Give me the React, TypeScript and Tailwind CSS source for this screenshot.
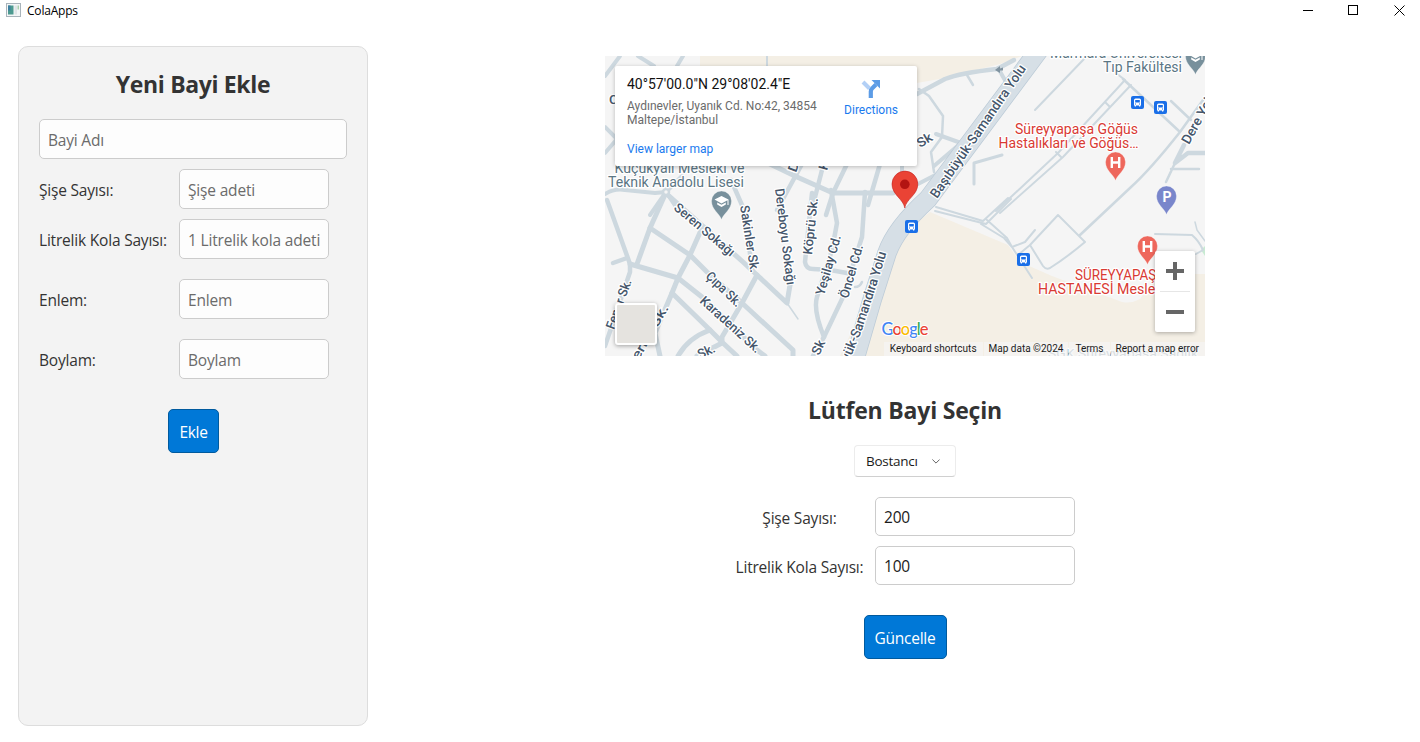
import React from "react";

const ROAD = "#cdd8df";

const roads: { d: string; w: number }[] = [
  { w: 4.5, d: "M607 200L630 264L630 272L605 346" },
  { w: 4.5, d: "M613 263L627 258" },
  { w: 5, d: "M668 188L650 228L637 264" },
  { w: 5, d: "M630 264L678 278" },
  { w: 5, d: "M668 195L743 262L757 275L787 303L790 285" },
  { w: 1.5, d: "M787 303L798 319" },
  { w: 5, d: "M650 228L690 255L707 272L742 303L793 350L793 356" },
  { w: 5, d: "M702 228L690 255L678 278L672 293L655 333L660 356" },
  { w: 5, d: "M678 278L702 297L757 350L765 356" },
  { w: 5, d: "M672 293L710 330L723 343L737 356" },
  { w: 5, d: "M710 330Q688 338 678 356" },
  { w: 5, d: "M757 275L742 303L722 337L722 343L697 356" },
  { w: 4.5, d: "M731 180L745 212L752 270" },
  { w: 4.5, d: "M812 193L805 262Q806 269 813 269L830 270L847 273" },
  { w: 4.5, d: "M831 190L837 223L832 250L817 297Q813 310 824 337" },
  { w: 4.5, d: "M865 192L862 237L843 297L824 337L813 356" },
  { w: 2.5, d: "M862 282Q860 287 855 287" },
  { w: 4, d: "M620 56L605 76M638 56L654 66M683 56L677 66" },
  { w: 2, d: "M767 56L767 66" },
  { w: 4, d: "M605 127L617 139L605 153" },
  { w: 4, d: "M605 194Q615 188 625 190L655 193L666 192L682 176M666 192L650 215M666 192L672 201L678 210" },
  { w: 5, d: "M770 164L797 177L833 193L893 193" },
  { w: 4.5, d: "M802 164L790 186L777 210M822 170L813 205M847 164L833 193L826 215M880 164L868 205" },
  { w: 4, d: "M902 164L902 173" },
  { w: 4.5, d: "M917 94L945 79Q960 73 997 69L1014 60" },
  { w: 2.5, d: "M967 75L973 85M919 89L929 96L943 116L942 137L931 152L934 172" },
  { w: 4, d: "M936 134L961 143L1000 97L1006 82L998 68" },
  { w: 4, d: "M918 184L943 171M934 166L961 143" },
  { w: 3, d: "M1002 155L974 163L974 184" },
  { w: 2, d: "M1085 58L1035 110" },
  { w: 2, d: "M1112 70L1125 80L1058 153L996 211M1131 85L1063 157L1000 213M1105 102L1110 107M1056 152L1061 157" },
  { w: 2.5, d: "M1123 79L1180 132L1203 100M1180 132Q1150 170 1130 188L1080 235M1171 101L1191 120" },
  { w: 4.5, d: "M1205 153L1188 153L1175 163L1184 145" },
  { w: 2.5, d: "M1175 163L1166 182M1171 169L1199 169" },
  { w: 2, d: "M936 207L983 221L1008 198M935 211L986 224L1011 199M987 220L1007 238L1012 247L1032 278M981 224L1004 238L1012 247L1025 242L1035 230M1030 245L1058 215L1085 242Q1066 258 1050 268Q1046 270 1043 266L1030 245L1018 255" },
  { w: 2, d: "M1155 234L1192 235Q1199 241 1203 250L1196 254" },
  { w: 1.5, d: "M1195 222L1197 230L1205 241" },
];

const MAIN_ROAD = "M1042 46L928 199Q896 228 887 253L872 300L854 362";

const LABEL = "#45566b";

type LabelProps = {
  x: number;
  y: number;
  r?: number;
  len: number;
  fill?: string;
  size?: number;
  weight?: number;
  anchor?: "start" | "middle" | "end";
  children: string;
};

function Label({ x, y, r = 0, len, fill = LABEL, size = 13, weight = 500, anchor = "middle", children }: LabelProps) {
  return (
    <text
      x={x}
      y={y}
      transform={`rotate(${r} ${x} ${y})`}
      textLength={len}
      lengthAdjust="spacingAndGlyphs"
      textAnchor={anchor}
      fontSize={size}
      fontWeight={weight}
      fill={fill}
      stroke="#ffffff"
      strokeWidth={2.5}
      strokeLinejoin="round"
      paintOrder="stroke"
    >
      {children}
    </text>
  );
}

function Bus({ x, y }: { x: number; y: number }) {
  return (
    <g transform={`translate(${x} ${y})`}>
      <rect width="13" height="13" rx="2" fill="#1a6fe8" />
      <path fill="#fff" fillRule="evenodd" d="M3 4Q3 2.4 4.6 2.4H8.4Q10 2.4 10 4V9.5H9.3V10.6H8V9.5H5V10.6H3.7V9.5H3ZM4.2 4V6.5H8.8V4ZM4 7.6V8.5H5V7.6ZM8 7.6V8.5H9V7.6Z" />
    </g>
  );
}

function Pin({ x, y, fill, children }: { x: number; y: number; fill: string; children?: React.ReactNode }) {
  return (
    <g transform={`translate(${x} ${y})`}>
      <path d="M0 18.5C-2 12.500 -10 8.500 -10 0A10 10 0 0 1 10 0C10 8.500 2 12.500 0 18.5Z" fill={fill} stroke="#fff" strokeOpacity=".5" strokeWidth=".6" />
      {children}
    </g>
  );
}

function Cap() {
  return (
    <g fill="#fff">
      <path d="M-7 -1.500L0 -5L7 -1.500V4H6V-.8L0 2.400Z" />
      <path d="M-4.300 1.400L0 3.800L4.300 1.400V3.600L0 6L-4.300 3.600Z" />
    </g>
  );
}

function HospitalMark() {
  return <path d="M-3.700 -5V6M3.700 -5V6M-4 .5H4" stroke="#fff" strokeWidth="2.4" fill="none" />;
}

function MapCanvas() {
  return (
    <svg viewBox="605 56 600 300" width="600" height="300" className="block font-['Roboto',sans-serif]">
      <rect x="605" y="56" width="600" height="300" fill="#f5f5f5" />
      <path d="M700 56H1022L1000 64L945 78L917 83H700Z" fill="#f4efe5" />
      <path d="M930 212L1008 245L1020 262L1052 276L1122 302Q1131 304 1140 299L1158 274H1205V356H840L862 310L880 250Z" fill="#f4efe5" />
      <path d="M1201 250L1205 246V256Z" fill="#c8ead2" />
      <g fill="none" stroke={ROAD} strokeLinejoin="round" strokeLinecap="round">
        {roads.map((r, i) => (
          <path key={i} d={r.d} strokeWidth={r.w} />
        ))}
      </g>
      <path d={MAIN_ROAD} fill="none" stroke="#bccbd7" strokeWidth="19.500" />
      <path d={MAIN_ROAD} fill="none" stroke="#d6dfe6" strokeWidth="18" />
      <path d="M995 70L1000 66V68.500L1003 67.500V70.500L1000 70.500V73Z" fill="#8093a0" />
      <circle cx="666" cy="192" r="3" fill="#f5f5f5" stroke={ROAD} strokeWidth="2.500" />

      <Label x={679.500} y={173} len={130} size={14} weight={400} fill="#5b7684">Küçükyalı Mesleki ve</Label>
      <Label x={676} y={187} len={136} size={14} weight={400} fill="#5b7684">Teknik Anadolu Lisesi</Label>
      <Label x={1116} y={58} len={132} size={14} weight={400} fill="#5b7684">Marmara Üniversitesi</Label>
      <Label x={1142.500} y={72} len={79} size={14} weight={400} fill="#5b7684">Tıp Fakültesi</Label>
      <Label x={673} y={209} r={40} len={75} anchor="start">Seren Sokağı</Label>
      <Label x={740} y={206} r={81} len={68} anchor="start">Sakinler Sk.</Label>
      <Label x={775} y={189} r={83} len={97} anchor="start">Dereboyu Sokağı</Label>
      <Label x={812} y={255} r={-84} len={57} anchor="start">Köprü Sk.</Label>
      <Label x={824} y={296} r={-74} len={62} anchor="start">Yeşilay Cd.</Label>
      <Label x={848} y={299} r={-74} len={55} anchor="start">Öncel Cd.</Label>
      <Label x={705} y={277} r={44} len={44} anchor="start">Çıpa Sk.</Label>
      <Label x={699} y={302} r={42} len={77} anchor="start">Karadeniz Sk.</Label>
      <Label x={614} y={330} r={-70} len={52} anchor="start">Fener Sk.</Label>
      <Label x={633} y={370} r={-60} len={72} anchor="start">Cerrel Sk.</Label>
      <Label x={700} y={359} r={-25} len={18} anchor="start">Sk.</Label>
      <Label x={819} y={356} r={-64} len={15} anchor="start">Sk</Label>
      <Label x={920} y={148} r={-31} len={16} anchor="start">Sk</Label>
      <Label x={796} y={173} r={-70} len={10} anchor="start">D</Label>
      <Label x={827} y={171} r={-75} len={9} anchor="start">K</Label>
      <Label x={609} y={104} len={9} anchor="start">C</Label>
      <Label x={937} y={199} r={-55.500} len={158} size={13.500} anchor="start">Başıbüyük-Samandıra Yolu</Label>
      <path id="lowerYolu" d="M837.500 399L851 357L862 330L877 284L887 251" fill="none" />
      <text fontSize="13.500" fontWeight="500" fill={LABEL} stroke="#fff" strokeWidth="2.500" strokeLinejoin="round" paintOrder="stroke">
        <textPath href="#lowerYolu" startOffset="0" textLength="154">Başıbüyük-Samandıra Yolu</textPath>
      </text>
      <Label x={1189} y={145} r={-61} len={58} size={13.500} anchor="start">Dere Yolu</Label>
      <Label x={1076.500} y={134} len={123} size={14} weight={400} fill="#d93a33">Süreyyapaşa Göğüs</Label>
      <Label x={1068.500} y={148} len={140} size={14} weight={400} fill="#d93a33">Hastalıkları ve Göğüs…</Label>
      <Label x={1075} y={280} len={90} size={14} weight={400} anchor="start" fill="#d93a33">SÜREYYAPAŞA</Label>
      <Label x={1038} y={294} len={138} size={14} weight={400} anchor="start" fill="#d93a33">HASTANESİ Meslek H</Label>
      <Label x={1048} y={358} len={150} size={13} weight={400} anchor="start" fill="#93a6b0">SGK Süreyyapaşa Sağlık</Label>

      <Pin x={721.500} y={201} fill="#78909c"><Cap /></Pin>
      <Pin x={1195.500} y={56} fill="#78909c"><Cap /></Pin>
      <Pin x={1115.500} y={162} fill="#ee675c"><HospitalMark /></Pin>
      <Pin x={1147.500} y={246} fill="#ee675c"><HospitalMark /></Pin>
      <Pin x={1166.500} y={196} fill="#7986cb">
        <text x="0.5" y="5.800" textAnchor="middle" fontSize="14" fontWeight="700" fill="#fff">P</text>
      </Pin>
      <Bus x={1131} y={96} />
      <Bus x={1154} y={101} />
      <Bus x={905} y={220} />
      <Bus x={1017} y={253} />

      <path d="M904.800 208C903.500 199 892 195 892 184A12.900 12.900 0 0 1 917.800 184C917.800 195 906 199 904.800 208Z" fill="#ea4335" stroke="#c5221f" strokeWidth=".6" />
      <circle cx="904.800" cy="184.300" r="4.800" fill="#b31412" />

      <text x="881.500" y="334.500" fontSize="16.500" textLength="47" fontWeight="500" stroke="#fff" strokeWidth="2" paintOrder="stroke" className="font-['Lato',sans-serif]">
        <tspan fill="#4285f4">G</tspan>
        <tspan fill="#ea4335">o</tspan>
        <tspan fill="#fbbc04">o</tspan>
        <tspan fill="#4285f4">g</tspan>
        <tspan fill="#34a853">l</tspan>
        <tspan fill="#ea4335">e</tspan>
      </text>
    </svg>
  );
}

function MapPanel() {
  return (
    <div className="relative h-[300px] w-[600px] shrink-0 overflow-hidden font-['Roboto',sans-serif]">
      <MapCanvas />
      <div className="absolute left-[10px] top-[10px] flex h-[100px] w-[302px] justify-between rounded-[2px] bg-white pl-3 pr-[19px] pt-[10px] shadow-[0_1px_4px_rgba(0,0,0,0.25)]">
        <div className="flex flex-col whitespace-nowrap">
          <div className="text-[14px] leading-[17px] text-[#111]">40°57'00.0"N 29°08'02.4"E</div>
          <div className="mt-[6px] text-[12px] leading-[14px] text-[#6b6b6b]">
            Aydınevler, Uyanık Cd. No:42, 34854
            <br />
            Maltepe/İstanbul
          </div>
          <div className="mt-[15px] text-[12px] leading-[14px] text-[#1a7aee]">View larger map</div>
        </div>
        <div className="flex flex-col items-center pt-[3px]">
          <svg width="20" height="20" viewBox="0 0 20 20">
            <path d="M2 3L8.500 9.500" stroke="#b3d0f6" strokeWidth="4" fill="none" />
            <path d="M9.800 19V12.500Q9.800 10.500 11.500 9L15 5.500" stroke="#5c9ce6" strokeWidth="4.200" fill="none" />
            <path d="M10.500 1H19V9.500Z" fill="#5c9ce6" />
          </svg>
          <div className="mt-[4px] text-[12px] leading-[14px] text-[#1a7aee]">Directions</div>
        </div>
      </div>
      <div className="absolute left-[10px] top-[247px] h-[42px] w-[42px] rounded-[3px] border-2 border-white bg-[#e5e3df] shadow-[0_1px_4px_rgba(0,0,0,0.35)]" />
      <div className="absolute left-[550px] top-[195px] flex h-[81px] w-10 flex-col items-center rounded-[2px] bg-white shadow-[0_1px_4px_rgba(0,0,0,0.3)]">
        <div className="flex h-10 items-center justify-center">
          <svg width="18" height="18" viewBox="0 0 18 18">
            <path d="M9 0V18M0 9H18" stroke="#666" strokeWidth="4" />
          </svg>
        </div>
        <div className="h-px w-[30px] bg-[#e6e6e6]" />
        <div className="flex h-10 items-center justify-center">
          <svg width="18" height="4" viewBox="0 0 18 4">
            <path d="M0 2H18" stroke="#666" strokeWidth="4" />
          </svg>
        </div>
      </div>
      <div className="absolute bottom-0 right-0 flex h-[14px] gap-px whitespace-nowrap text-[10px] leading-[14px] text-[#1c1c1c]">
        <span className="bg-[#f5f5f5]/70 px-[6px]">Keyboard shortcuts</span>
        <span className="bg-[#f5f5f5]/70 px-[5px]">Map data ©2024</span>
        <span className="bg-[#f5f5f5]/70 px-[6px]">Terms</span>
        <span className="bg-[#f5f5f5]/70 pl-[5px] pr-[6px]">Report a map error</span>
      </div>
    </div>
  );
}

function TitleBar() {
  return (
    <header className="flex h-[46px] shrink-0 items-start justify-between">
      <div className="flex h-[21px] items-center pl-[6px]">
        <svg width="15" height="14" viewBox="0 0 15 14" className="mb-px">
          <rect x=".5" y=".5" width="14" height="13" fill="#f4f6f7" stroke="#a9b4bb" />
          <rect x="2" y="2.500" width="5.500" height="9" fill="#4d9a90" />
          <rect x="2" y="2.500" width="2.500" height="5" fill="#3c7fa0" />
          <rect x="8.500" y="2.500" width="2.500" height="9" fill="#dfe5e8" />
          <rect x="11.500" y="2.500" width="1.500" height="4" fill="#a8cfae" />
        </svg>
        <span className="ml-[6px] text-[12px] tracking-[-0.2px] text-black">ColaApps</span>
      </div>
      <div className="flex h-5 items-center">
        <div className="flex w-[46px] justify-center">
          <div className="mt-px h-px w-[10px] bg-black" />
        </div>
        <div className="flex w-[44px] justify-center">
          <div className="h-[10px] w-[10px] border border-black" />
        </div>
        <div className="flex w-[45px] justify-center pl-[3px]">
          <svg width="11" height="11" viewBox="0 0 11 11">
            <path d="M.5 .5L10.500 10.500M10.500 .5L.5 10.500" stroke="#000" />
          </svg>
        </div>
      </div>
    </header>
  );
}

function FormRow({ label, placeholder }: { label: string; placeholder: string }) {
  return (
    <div className="flex h-10 items-center">
      <label className="w-[140px] whitespace-nowrap pt-[4px] text-[15.5px] tracking-[-0.2px] text-[#333]">{label}</label>
      <input
        placeholder={placeholder}
        className="h-10 w-[150px] rounded-[5px] border border-[#ccc] bg-[#fdfdfd] px-2 pt-px text-[15.5px] tracking-[-0.17px] outline-none placeholder:text-[#6b6b6b]"
      />
    </div>
  );
}

function UpdateRow({ label, value }: { label: string; value: string }) {
  return (
    <div className="flex h-[39px] items-center">
      <label className="mr-[10px] w-[130px] whitespace-nowrap pr-px pt-[5px] text-center text-[15.5px] tracking-[-0.2px] text-[#333]">{label}</label>
      <input
        defaultValue={value}
        className="h-[39px] w-[200px] rounded-[5px] border border-[#ccc] bg-white px-2 text-[15.5px] tracking-[-0.2px] text-[#1b1b1b] outline-none"
      />
    </div>
  );
}

export default function App() {
  return (
    <div className="flex h-[742px] w-[1420px] flex-col overflow-hidden bg-white font-['Open_Sans','Noto_Sans',sans-serif]">
      <TitleBar />
      <main className="flex">
        <section className="ml-[18px] flex h-[680px] w-[350px] shrink-0 flex-col rounded-[10px] border border-[#ddd] bg-[#f3f3f3] px-5">
          <h1 className="mt-[21px] h-8 text-center text-[23px] font-bold leading-8 tracking-[-0.35px] text-[#333]">Yeni Bayi Ekle</h1>
          <input
            placeholder="Bayi Adı"
            className="mt-[19px] h-10 w-full rounded-[5px] border border-[#ccc] bg-[#fdfdfd] px-2 pt-px text-[15.5px] tracking-[-0.2px] outline-none placeholder:text-[#6b6b6b]"
          />
          <div className="mt-[10px] flex flex-col gap-[10px]">
            <FormRow label="Şişe Sayısı:" placeholder="Şişe adeti" />
            <FormRow label="Litrelik Kola Sayısı:" placeholder="1 Litrelik kola adeti" />
          </div>
          <div className="mt-5 flex flex-col gap-5">
            <FormRow label="Enlem:" placeholder="Enlem" />
            <FormRow label="Boylam:" placeholder="Boylam" />
          </div>
          <button className="mt-[30px] ml-[129px] h-11 w-[51px] rounded-[5px] border border-[#005a9e] bg-[#0078d7] pt-[3px] text-[15.5px] tracking-[-0.3px] text-white">
            Ekle
          </button>
        </section>

        <section className="ml-[237px] flex w-[600px] flex-col items-center pt-[10px]">
          <MapPanel />
          <h2 className="mt-[38px] h-8 text-center text-[23px] font-bold leading-8 tracking-[-0.2px] text-[#333]">Lütfen Bayi Seçin</h2>
          <button className="mt-[19px] flex h-8 w-[102px] items-center rounded-[4px] border border-[#ececec] border-b-[#d0d0d0] bg-white pl-[11px] text-[13.5px] tracking-[-0.25px] text-[#1b1b1b]">
            <span className="w-[66px] text-left">Bostancı</span>
            <svg width="8" height="5" viewBox="0 0 8 5">
              <path d="M.4 .5L4 4.100L7.600 .5" fill="none" stroke="#666" />
            </svg>
          </button>
          <div className="mt-5 flex flex-col gap-[10px]">
            <UpdateRow label="Şişe Sayısı:" value="200" />
            <UpdateRow label="Litrelik Kola Sayısı:" value="100" />
          </div>
          <button className="mt-[30px] h-11 w-[83px] rounded-[5px] border border-[#005a9e] bg-[#0078d7] pt-[3px] text-[15.5px] tracking-[-0.25px] text-white">
            Güncelle
          </button>
        </section>
      </main>
    </div>
  );
}
